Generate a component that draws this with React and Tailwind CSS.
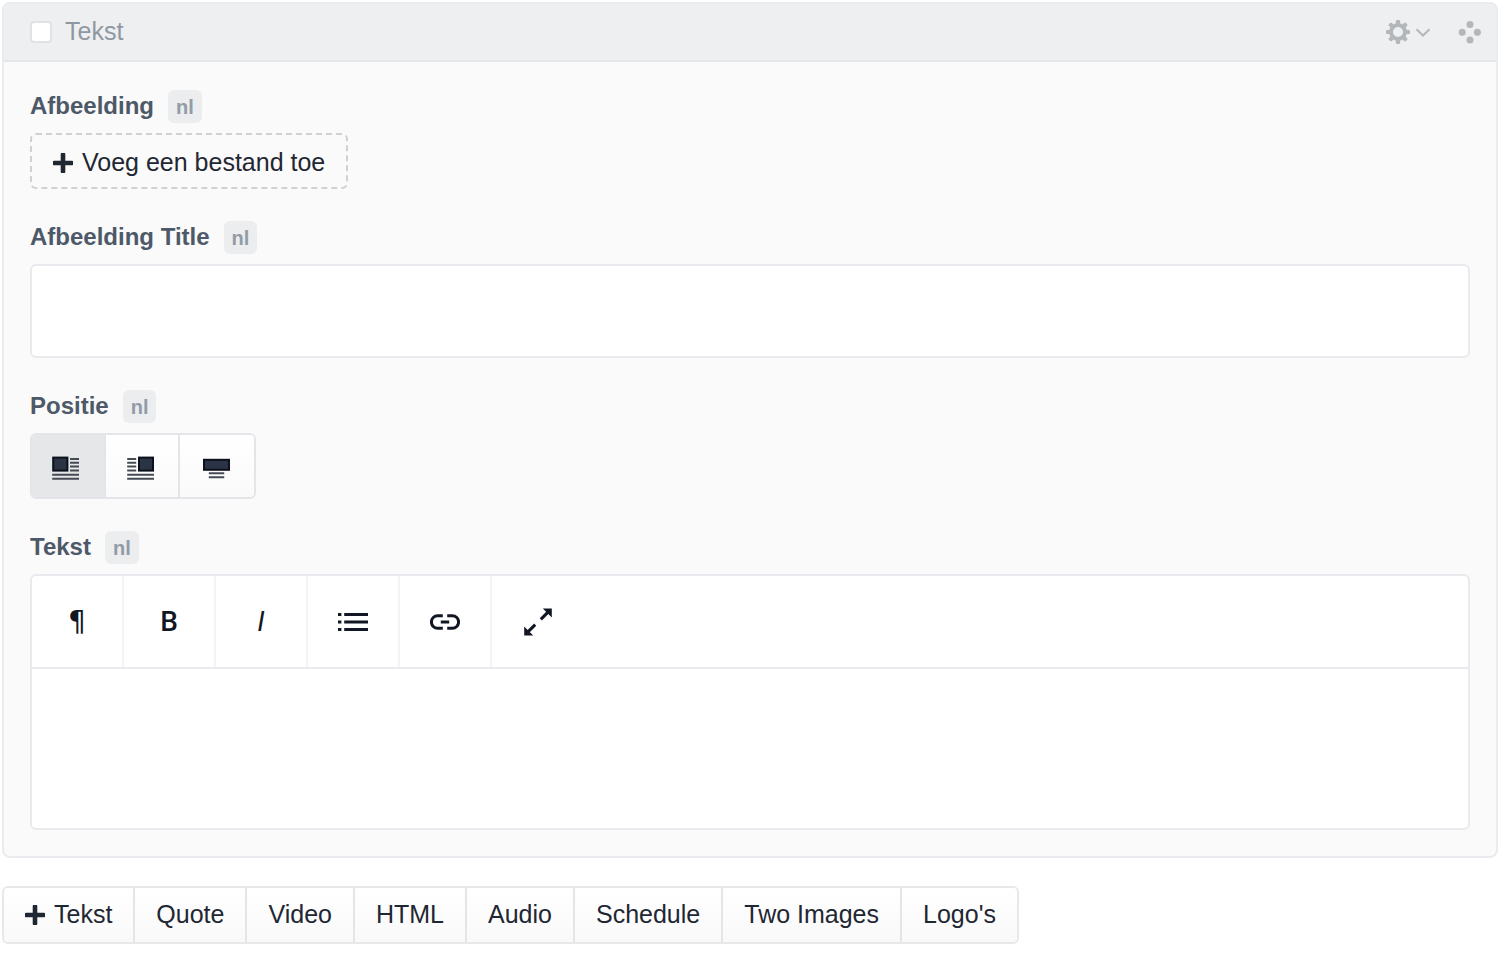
import React, { useState } from "react";

const bloques = ["Tekst", "Quote", "Video", "HTML", "Audio", "Schedule", "Two Images", "Logo's"];

function PlusIcon() {
  return (
    <svg className="h-5 w-5 shrink-0" viewBox="0 0 20 20" aria-hidden="true">
      <path d="M10 1.5v17M1.5 10h17" stroke="currentColor" strokeWidth="4.6" strokeLinecap="round" />
    </svg>
  );
}

function GearIcon() {
  return (
    <svg className="h-6 w-6" viewBox="0 0 24 24" aria-hidden="true">
      <circle cx="12" cy="12" r="7" fill="none" stroke="currentColor" strokeWidth="4" />
      {[0, 45, 90, 135, 180, 225, 270, 315].map((angulo) => (
        <rect
          key={angulo}
          x="9.9"
          y="0"
          width="4.2"
          height="5"
          rx="1.2"
          fill="currentColor"
          transform={`rotate(${angulo} 12 12)`}
        />
      ))}
    </svg>
  );
}

function ChevronIcon() {
  return (
    <svg className="h-4 w-4" viewBox="0 0 16 16" aria-hidden="true">
      <path d="M1.5 5.2L8 11.5l6.5-6.3" fill="none" stroke="currentColor" strokeWidth="2" />
    </svg>
  );
}

function MoveIcon() {
  return (
    <svg className="h-6 w-6" viewBox="0 0 24 24" fill="currentColor" aria-hidden="true">
      <circle cx="12" cy="4.4" r="3.5" />
      <circle cx="4.2" cy="12.2" r="3.5" />
      <circle cx="19.4" cy="12.2" r="3.5" />
      <circle cx="12" cy="20" r="3.5" />
    </svg>
  );
}

// --- ICONOS DE POSICIÓN ---
function IzquierdaIcon() {
  return (
    <svg className="h-7 w-8" viewBox="0 0 32 28" aria-hidden="true">
      <rect x="1.2" y="5.6" width="14.2" height="13" fill="#2b3444" stroke="#0c111b" strokeWidth="2" />
      <path d="M18 6.9h9M18 10.7h9M18 14.6h9M18 18.4h9M.2 22.7h26.8M.2 26.7h26.8" stroke="#454b54" strokeWidth="2" />
    </svg>
  );
}

function DerechaIcon() {
  return (
    <svg className="h-7 w-8" viewBox="0 0 32 28" aria-hidden="true">
      <rect x="13" y="5.6" width="14" height="13" fill="#2b3444" stroke="#0c111b" strokeWidth="2" />
      <path d="M1.2 6.9h9M1.2 10.7h9M1.2 14.6h9M1.2 18.4h9M1.2 22.7H28M1.2 26.7H28" stroke="#454b54" strokeWidth="2" />
    </svg>
  );
}

function CentroIcon() {
  return (
    <svg className="h-7 w-8" viewBox="0 0 32 28" aria-hidden="true">
      <rect x="3" y="7.8" width="25" height="10" fill="#2b3444" stroke="#0c111b" strokeWidth="2" />
      <path d="M7.8 21.2h15.4M7.8 25.3h15.4" stroke="#454b54" strokeWidth="2" />
    </svg>
  );
}

// --- ICONOS DEL EDITOR ---
function ListaIcon() {
  return (
    <svg className="h-[30px] w-[30px]" viewBox="0 0 30 30" aria-hidden="true">
      <path d="M0 7.5h3.4M0 15h3.4M0 22.5h3.4M6.2 7.5H30M6.2 15H30M6.2 22.5H30" stroke="currentColor" strokeWidth="3.2" />
    </svg>
  );
}

function EnlaceIcon() {
  return (
    <svg className="h-[30px] w-[30px]" viewBox="0 0 30 30" fill="none" stroke="currentColor" aria-hidden="true">
      <path d="M12.8 8.7H7.7a6.2 6.2 0 0 0 0 12.6h5.1M17.2 8.7h5.1a6.2 6.2 0 0 1 0 12.6h-5.1" strokeWidth="3" />
      <path d="M10.8 15h8.4" strokeWidth="3.2" />
    </svg>
  );
}

function ExpandirIcon() {
  return (
    <svg className="h-[30px] w-[30px]" viewBox="0 0 30 30" aria-hidden="true">
      <path d="M17.8 12.4l8-8M12.2 17.6l-8 8" stroke="currentColor" strokeWidth="3" />
      <path d="M19.8 1.4h9v9l-3-3-3-3zM1.2 19.6v9h9z" fill="currentColor" />
    </svg>
  );
}

const posiciones = [
  { id: "left", label: "Links", Icon: IzquierdaIcon },
  { id: "right", label: "Rechts", Icon: DerechaIcon },
  { id: "full", label: "Midden", Icon: CentroIcon },
];

const herramientas = [
  { id: "format", contenido: <span className="font-['DejaVu_Sans',sans-serif]">¶</span> },
  { id: "bold", contenido: <span className="font-medium">B</span> },
  { id: "italic", contenido: <span className="italic">I</span> },
  { id: "list", contenido: <ListaIcon /> },
  { id: "link", contenido: <EnlaceIcon /> },
  { id: "fullscreen", contenido: <ExpandirIcon /> },
];

function Campo({ titulo, htmlFor, children }) {
  return (
    <div>
      <div className="mb-[10px] flex items-center gap-[14px]">
        <label htmlFor={htmlFor} className="pb-px text-2xl leading-8 font-bold text-[#4d5868]">
          {titulo}
        </label>
        <span className="flex h-[33px] items-center rounded-md bg-[#ebedef] px-2 text-xl font-bold text-[#929ca6]">
          nl
        </span>
      </div>
      {children}
    </div>
  );
}

function App() {
  const [marcado, setMarcado] = useState(false);
  const [titulo, setTitulo] = useState("");
  const [posicion, setPosicion] = useState("left");
  const [texto, setTexto] = useState("");

  return (
    <div className="bg-white px-[2px] pt-[2px] font-['Liberation_Sans',Arial,sans-serif] text-[25px] text-[#1f2733]">
      <div className="rounded-lg border-2 border-[#e9ebee] bg-[#fafafa]">
        {/* Cabecera del bloque */}
        <div className="flex h-[58px] items-center justify-between rounded-t-md border-b-2 border-[#e5e7ea] bg-[#edeff1] pr-[14px] pl-[26px]">
          <label className="flex items-center gap-[13px] leading-8 text-[#8f98a1]">
            <input
              type="checkbox"
              className="h-[22px] w-[22px] appearance-none rounded border-2 border-[#e0e2e5] bg-white checked:bg-[#8f98a1]"
              checked={marcado}
              onChange={(e) => setMarcado(e.target.checked)}
            />
            <span className="pb-[2px]">Tekst</span>
          </label>
          <div className="flex items-center gap-[27px] text-[#b4b7b9]">
            <button type="button" aria-label="Acties" className="flex items-center gap-[5px]">
              <GearIcon />
              <ChevronIcon />
            </button>
            <button type="button" aria-label="Verplaatsen">
              <MoveIcon />
            </button>
          </div>
        </div>

        {/* Campos */}
        <div className="flex flex-col gap-8 px-[26px] pt-7 pb-[26px]">
          <Campo titulo="Afbeelding" htmlFor="afbeelding">
            <button
              id="afbeelding"
              type="button"
              className="flex h-14 items-center gap-[9px] rounded-md border-2 border-dashed border-[#cfd1d4] px-[21px] pt-1"
            >
              <PlusIcon />
              Voeg een bestand toe
            </button>
          </Campo>

          <Campo titulo="Afbeelding Title" htmlFor="afbeelding-title">
            <input
              id="afbeelding-title"
              type="text"
              className="block h-[94px] w-full rounded-md border-2 border-[#e8eaed] bg-white px-5 outline-none"
              value={titulo}
              onChange={(e) => setTitulo(e.target.value)}
            />
          </Campo>

          <Campo titulo="Positie" htmlFor="positie-left">
            <div className="flex h-[66px] w-fit divide-x-2 divide-[#e3e5e8] overflow-hidden rounded-md border-2 border-[#e3e5e8]">
              {posiciones.map(({ id, label, Icon }) => (
                <button
                  key={id}
                  id={`positie-${id}`}
                  type="button"
                  aria-label={label}
                  aria-pressed={posicion === id}
                  className={`flex w-[74px] items-center justify-center ${
                    posicion === id ? "bg-[#e5e7e9]" : "bg-linear-to-b from-white to-[#fafafa]"
                  }`}
                  onClick={() => setPosicion(id)}
                >
                  <Icon />
                </button>
              ))}
            </div>
          </Campo>

          <Campo titulo="Tekst" htmlFor="tekst">
            <div className="overflow-hidden rounded-md border-2 border-[#e8eaed] bg-white">
              <div className="flex h-[93px] border-b-2 border-[#e8eaed] font-[Roboto,sans-serif] text-[28px] text-[#111722]">
                {herramientas.map(({ id, contenido }) => (
                  <button
                    key={id}
                    type="button"
                    aria-label={id}
                    className="flex w-[92px] items-center justify-center border-r-2 border-[#f3f4f6] last:border-r-0"
                  >
                    {contenido}
                  </button>
                ))}
              </div>
              <textarea
                id="tekst"
                className="block h-[159px] w-full resize-none px-5 py-4 outline-none"
                value={texto}
                onChange={(e) => setTexto(e.target.value)}
              />
            </div>
          </Campo>
        </div>
      </div>

      {/* Botones para agregar bloques */}
      <div className="mt-7 flex h-[58px] w-fit divide-x-2 divide-[#e3e5e8] overflow-hidden rounded-md border-2 border-[#e6e8ea]">
        {bloques.map((bloque, i) => (
          <button
            key={bloque}
            type="button"
            className="flex items-center gap-[9px] bg-linear-to-b from-white to-[#f9f9fa] px-[21px] whitespace-nowrap"
          >
            {i === 0 && <PlusIcon />}
            {bloque}
          </button>
        ))}
      </div>
    </div>
  );
}

export default App;
